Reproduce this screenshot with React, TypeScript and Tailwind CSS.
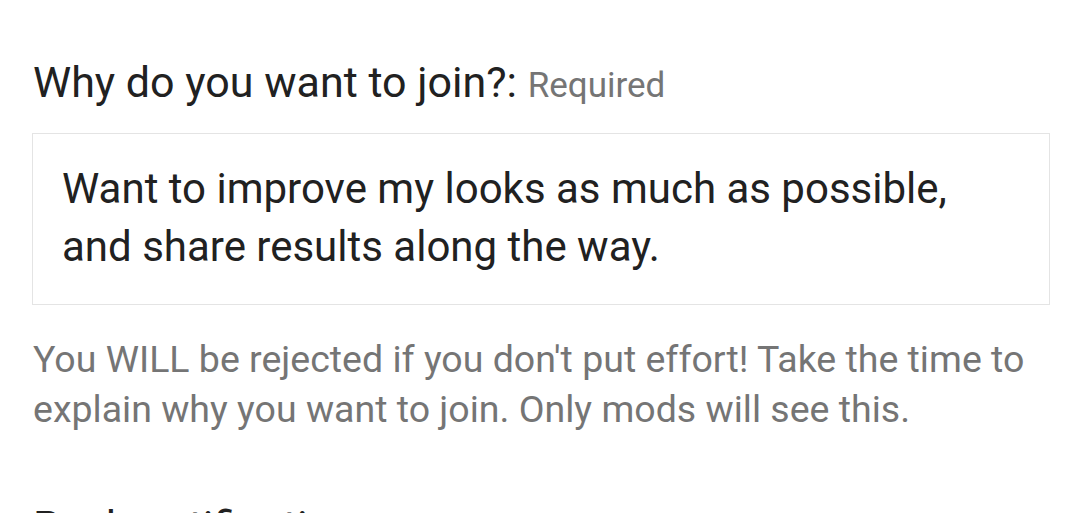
export default function App() {
  return (
    <div className="h-screen overflow-hidden bg-white pl-[32px] pr-[27px] pt-[55px] font-['Roboto',sans-serif]">
      {/* Question */}
      <h2 className="pl-px text-[43px] leading-[54px] text-[#212121]">
        Why do you want to join?:{' '}
        <span className="text-[35px] leading-none text-[#757575]">Required</span>
      </h2>

      {/* Answer box */}
      <div className="mt-[24px] border border-[#e4e4e4] pl-[29px] pr-4 pt-[26px] pb-[28px] text-[42px] leading-[58px] text-[#212121]">
        Want to improve my looks as much as possible,
        <br />
        and share results along the way.
      </div>

      <p className="mt-[29px] pl-px text-[37.5px] leading-[50px] text-[#757575]">
        You WILL be rejected if you don't put effort! Take the time to explain why you want to join. Only mods will see this.
      </p>

      <h2 className="mt-[65px] pl-px text-[43px] leading-[54px] text-[#212121] whitespace-nowrap">
        Push notifications
      </h2>
    </div>
  )
}
